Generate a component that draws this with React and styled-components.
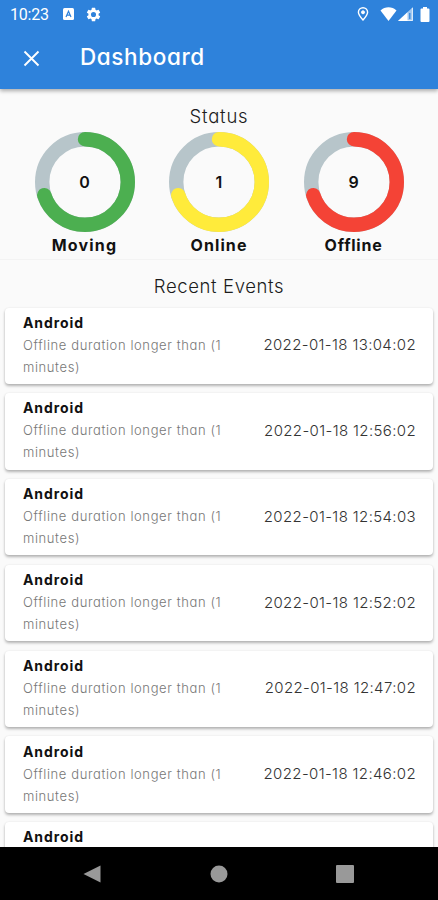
import React from 'react';
import styled, { createGlobalStyle } from 'styled-components';

const GlobalStyle = createGlobalStyle`
  * {
    box-sizing: border-box;
  }

  body {
    margin: 0;
    background: #fafafa;
    font-family: Inter, "Open Sans", sans-serif;
    font-feature-settings: "cv11";
    color: #1c1c1c;
  }
`;

const Screen = styled.div`
  display: flex;
  flex-direction: column;
  width: 438px;
  height: 900px;
  overflow: hidden;
  background: #fafafa;
`;

const Header = styled.header`
  flex: none;
  height: 89px;
  background: #2e82db;
  color: #fff;
  box-shadow: 0 2px 4px rgba(0, 0, 0, 0.32);
  z-index: 1;
`;

const StatusBar = styled.div`
  display: flex;
  align-items: center;
  height: 28px;
  padding: 0 8px 0 10px;
`;

const Clock = styled.span`
  width: 53px;
  font-family: Roboto, sans-serif;
  font-size: 16px;
  letter-spacing: -0.2px;
`;

const StatusIcons = styled.div`
  display: flex;
  align-items: center;
  gap: ${(props) => props.$gap}px;
  margin-left: ${(props) => (props.$end ? 'auto' : '0')};

  svg {
    display: block;
  }
`;

const TitleBar = styled.div`
  display: flex;
  align-items: center;
  height: 61px;
  padding: 0 23px;
`;

const CloseButton = styled.button`
  display: flex;
  width: 57px;
  padding: 0;
  border: none;
  background: none;
  color: inherit;
`;

const Title = styled.h1`
  margin: -4px 0 0;
  font-size: 22.5px;
  line-height: 30px;
  font-weight: 500;
  letter-spacing: 0.6px;
`;

const StatusSection = styled.section`
  flex: none;
  height: 171px;
  padding-top: 13px;
  border-bottom: 1px solid #f3f3f3;
`;

const SectionTitle = styled.h2`
  margin: 0;
  text-align: center;
  font-size: 18.5px;
  line-height: 28px;
  font-weight: 300;
  letter-spacing: ${(props) => props.$spacing || '0'};
`;

const Gauges = styled.div`
  display: grid;
  grid-template-columns: repeat(3, 134.5px);
  justify-content: center;
  margin-top: 2px;
`;

const Gauge = styled.div`
  display: flex;
  flex-direction: column;
  align-items: center;
`;

const Ring = styled.div`
  display: grid;
  place-items: center;
  width: 100px;
  height: 100px;

  > * {
    grid-area: 1 / 1;
  }
`;

const GaugeValue = styled.span`
  font-size: 16px;
  font-weight: 600;
  color: #111;
`;

const GaugeLabel = styled.span`
  margin-top: 1px;
  font-size: 16px;
  line-height: 24px;
  font-weight: 700;
  color: #111;
  letter-spacing: ${(props) => props.$spacing};
`;

const EventsSection = styled.section`
  flex: 1;
  min-height: 0;
  padding: 12px 5px 0;
  overflow: hidden;
`;

const EventList = styled.ul`
  display: flex;
  flex-direction: column;
  gap: 9.4px;
  margin: 7.5px 0 0;
  padding: 0;
  list-style: none;
`;

const EventCard = styled.li`
  display: flex;
  flex: none;
  align-items: center;
  justify-content: space-between;
  height: 76.4px;
  padding: 0 17px 2px 18px;
  border-radius: 4px;
  background: #fff;
  box-shadow: 0 2px 3px rgba(0, 0, 0, 0.28), 0 0 2px rgba(0, 0, 0, 0.08);
`;

const EventInfo = styled.div`
  width: 212px;
`;

const EventName = styled.div`
  font-size: 14px;
  line-height: 22px;
  font-weight: 700;
  letter-spacing: 0.9px;
  color: #111;
`;

const EventText = styled.div`
  font-size: 13px;
  line-height: 22px;
  font-weight: 300;
  letter-spacing: 0.61px;
  color: #777;
`;

const EventTime = styled.time`
  font-size: 15px;
  font-weight: 300;
  letter-spacing: 0.37px;
  white-space: nowrap;
  color: #333;
`;

const NavBar = styled.nav`
  display: flex;
  flex: none;
  align-items: center;
  justify-content: space-between;
  height: 53px;
  padding: 0 84px 0 83px;
  background: #000;
  z-index: 1;
`;

const gauges = [
  { label: 'Moving', value: 0, color: '#4caf50', spacing: '1.2px' },
  { label: 'Online', value: 1, color: '#ffeb3b', spacing: '1.1px' },
  { label: 'Offline', value: 9, color: '#f44336', spacing: '0.75px' },
];

const events = [
  '2022-01-18 13:04:02',
  '2022-01-18 12:56:02',
  '2022-01-18 12:54:03',
  '2022-01-18 12:52:02',
  '2022-01-18 12:47:02',
  '2022-01-18 12:46:02',
  '2022-01-18 12:45:02',
];

const StatusGauge = ({ label, value, color, spacing }) => (
  <Gauge>
    <Ring>
      <svg width="100" height="100" viewBox="0 0 100 100" fill="none">
        <circle cx="50" cy="50" r="42.8" stroke="#b7c5ca" strokeWidth="14.4" />
        <circle
          cx="50"
          cy="50"
          r="42.8"
          stroke={color}
          strokeWidth="14.4"
          strokeLinecap="round"
          pathLength="100"
          strokeDasharray="70 100"
          transform="rotate(-90 50 50)"
        />
      </svg>
      <GaugeValue>{value}</GaugeValue>
    </Ring>
    <GaugeLabel $spacing={spacing}>{label}</GaugeLabel>
  </Gauge>
);

const App = () => {
  return (
    <>
      <GlobalStyle />
      <Screen>
        <Header>
          <StatusBar>
            <Clock>10:23</Clock>
            <StatusIcons $gap={11}>
              <svg width="11" height="12" viewBox="0 0 11 12">
                <rect width="11" height="12" rx="1.5" fill="#fff" />
                <path d="M3 9 5.5 3.2 8 9M4 7.2h3" fill="none" stroke="#2e82db" strokeWidth="1.2" />
              </svg>
              <svg width="17" height="17" viewBox="0 0 24 24" fill="#fff">
                <path d="M19.14 12.94c.04-.3.06-.61.06-.94s-.02-.64-.07-.94l2.03-1.58a.49.49 0 0 0 .12-.61l-1.92-3.32a.49.49 0 0 0-.59-.22l-2.39.96a7 7 0 0 0-1.62-.94l-.36-2.54a.48.48 0 0 0-.48-.41h-3.84a.48.48 0 0 0-.47.41l-.36 2.54c-.59.24-1.13.57-1.62.94l-2.39-.96a.48.48 0 0 0-.59.22L2.74 8.87a.47.47 0 0 0 .12.61l2.03 1.58a6 6 0 0 0 0 1.88l-2.03 1.58a.49.49 0 0 0-.12.61l1.92 3.32c.12.22.37.29.59.22l2.39-.96c.5.38 1.03.7 1.62.94l.36 2.54c.05.24.24.41.48.41h3.84c.24 0 .44-.17.47-.41l.36-2.54a7 7 0 0 0 1.62-.94l2.39.96c.22.08.47 0 .59-.22l1.92-3.32a.47.47 0 0 0-.12-.61zM12 15.6a3.6 3.6 0 1 1 0-7.2 3.6 3.6 0 0 1 0 7.2z" />
              </svg>
            </StatusIcons>
            <StatusIcons $end $gap={1}>
              <svg width="26" height="16" viewBox="0 0 26 16" fill="none" stroke="#fff">
                <path d="M10 14C7 10.7 5.400 8.700 5.400 6.300a4.600 4.600 0 0 1 9.200 0c0 2.400-1.600 4.400-4.600 7.700z" strokeWidth="1.400" />
                <circle cx="10" cy="6.300" r="1.500" fill="#fff" />
              </svg>
              <svg width="17" height="14" viewBox="0 0 16 14" fill="#fff">
                <path d="M8 14 0 3.500C4.500-.9 11.500-.9 16 3.500z" />
              </svg>
              <svg width="15" height="14" viewBox="0 0 15 14">
                <path d="M0 14 15 0v14z" fill="#fff" fillOpacity="0.55" />
                <path d="M0 14 9.500 5.200V14z" fill="#fff" />
                <path d="M14.400 1v12.500H2" fill="none" stroke="#fff" strokeOpacity="0.7" />
                <path d="M11.800 6v6" stroke="#2e82db" strokeWidth="1.200" />
              </svg>
              <svg width="16" height="15" viewBox="0 0 16 15" fill="#fff">
                <path d="M9 1.500V0h4v1.500h1.500q1 0 1 1V14q0 1-1 1h-7q-1 0-1-1V2.500q0-1 1-1z" />
              </svg>
            </StatusIcons>
          </StatusBar>
          <TitleBar>
            <CloseButton aria-label="Close">
              <svg width="17" height="17" viewBox="0 0 17 17" stroke="#fff" strokeWidth="1.9">
                <path d="M1.500 1.500l14 14M15.500 1.500l-14 14" />
              </svg>
            </CloseButton>
            <Title>Dashboard</Title>
          </TitleBar>
        </Header>

        <StatusSection>
          <SectionTitle $spacing="0.8px">Status</SectionTitle>
          <Gauges>
            {gauges.map((gauge) => (
              <StatusGauge key={gauge.label} {...gauge} />
            ))}
          </Gauges>
        </StatusSection>

        <EventsSection>
          <SectionTitle $spacing="0.62px">Recent Events</SectionTitle>
          <EventList>
            {events.map((time) => (
              <EventCard key={time}>
                <EventInfo>
                  <EventName>Android</EventName>
                  <EventText>Offline duration longer than (1 minutes)</EventText>
                </EventInfo>
                <EventTime>{time}</EventTime>
              </EventCard>
            ))}
          </EventList>
        </EventsSection>

        <NavBar>
          <svg width="18" height="20" viewBox="0 0 18 20" fill="#999">
            <path d="M17.500 1.500v17L.5 10z" />
          </svg>
          <svg width="18" height="18" viewBox="0 0 18 18" fill="#999">
            <circle cx="9" cy="9" r="8.500" />
          </svg>
          <svg width="18" height="18" viewBox="0 0 18 18" fill="#999">
            <rect width="18" height="18" rx="1" />
          </svg>
        </NavBar>
      </Screen>
    </>
  );
};

export default App;
